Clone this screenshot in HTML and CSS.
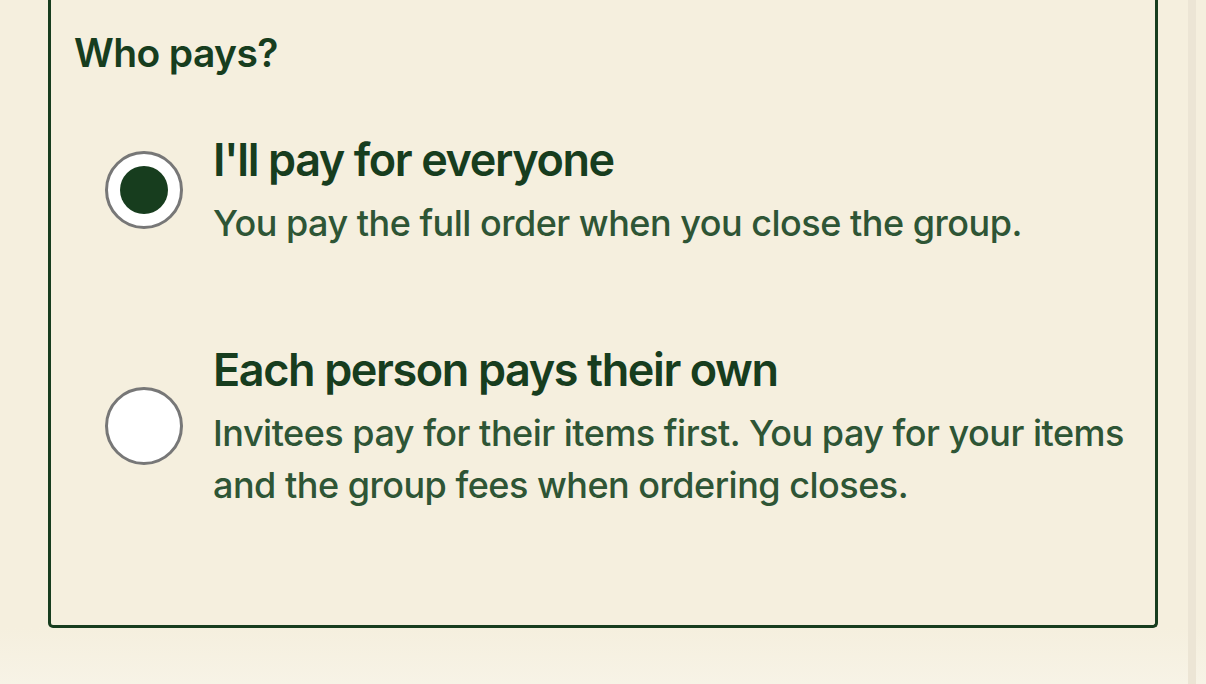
FILE: index.html
```html
<!DOCTYPE html>
<html lang="en">
<head>
<meta charset="utf-8">
<title>Who pays?</title>
<link rel="stylesheet" href="styles.css">
</head>
<body>
<div class="page">
  <div class="main">
    <fieldset class="group">
      <div class="legend">Who pays?</div>
      <label class="option option-1">
        <span class="radio checked"><span class="dot"></span></span>
        <span class="text">
          <span class="title">I'll pay for everyone</span>
          <span class="desc">You pay the full order when you close the group.</span>
        </span>
      </label>
      <label class="option option-2">
        <span class="radio"></span>
        <span class="text">
          <span class="title">Each person pays their own</span>
          <span class="desc">Invitees pay for their items first. You pay for your items and the group fees when ordering closes.</span>
        </span>
      </label>
    </fieldset>
  </div>
  <div class="rail"></div>
</div>
</body>
</html>
```

FILE: styles.css
```css
html, body {
  margin: 0;
  padding: 0;
}
body {
  width: 1206px;
  height: 684px;
  overflow: hidden;
  background: linear-gradient(to bottom, #f5efde 0, #f5efde 628px, #f7f3e6 684px);
  font-family: Inter, Lato, sans-serif;
  color: #173d1e;
}
.page {
  display: flex;
  height: 684px;
}
.main {
  width: 1188px;
  padding-left: 48px;
  box-sizing: border-box;
}
.rail {
  width: 8px;
  height: 684px;
  background: #ece5d5;
}
.group {
  margin: 0;
  width: 1110px;
  height: 628px;
  box-sizing: border-box;
  border: 3px solid #173d1e;
  border-top: 0;
  border-radius: 0 0 5px 5px;
  padding: 0 0 0 25px;
  min-width: 0;
}
.legend {
  font-size: 39px;
  font-weight: 600;
  line-height: 48px;
  padding-top: 29px;
  margin-left: -2px;
  letter-spacing: -0.6px;
}
.option {
  display: flex;
  align-items: center;
  padding-left: 29px;
}
.option-1 {
  margin-top: 53px;
}
.option-2 {
  margin-top: 91px;
}
.radio {
  flex: none;
  width: 78px;
  height: 78px;
  box-sizing: border-box;
  border: 3px solid #777777;
  border-radius: 50%;
  background: #ffffff;
  display: flex;
  align-items: center;
  justify-content: center;
}
.dot {
  width: 48px;
  height: 48px;
  border-radius: 50%;
  background: #173d1e;
}
.text {
  display: flex;
  flex-direction: column;
  margin-left: 30px;
  max-width: 920px;
}
.title {
  font-size: 45px;
  font-weight: 600;
  line-height: 60px;
  letter-spacing: -1.4px;
}
.desc {
  margin-top: 7px;
  font-size: 36px;
  font-weight: 500;
  line-height: 52px;
  color: #2e5535;
  letter-spacing: -0.5px;
}
```
